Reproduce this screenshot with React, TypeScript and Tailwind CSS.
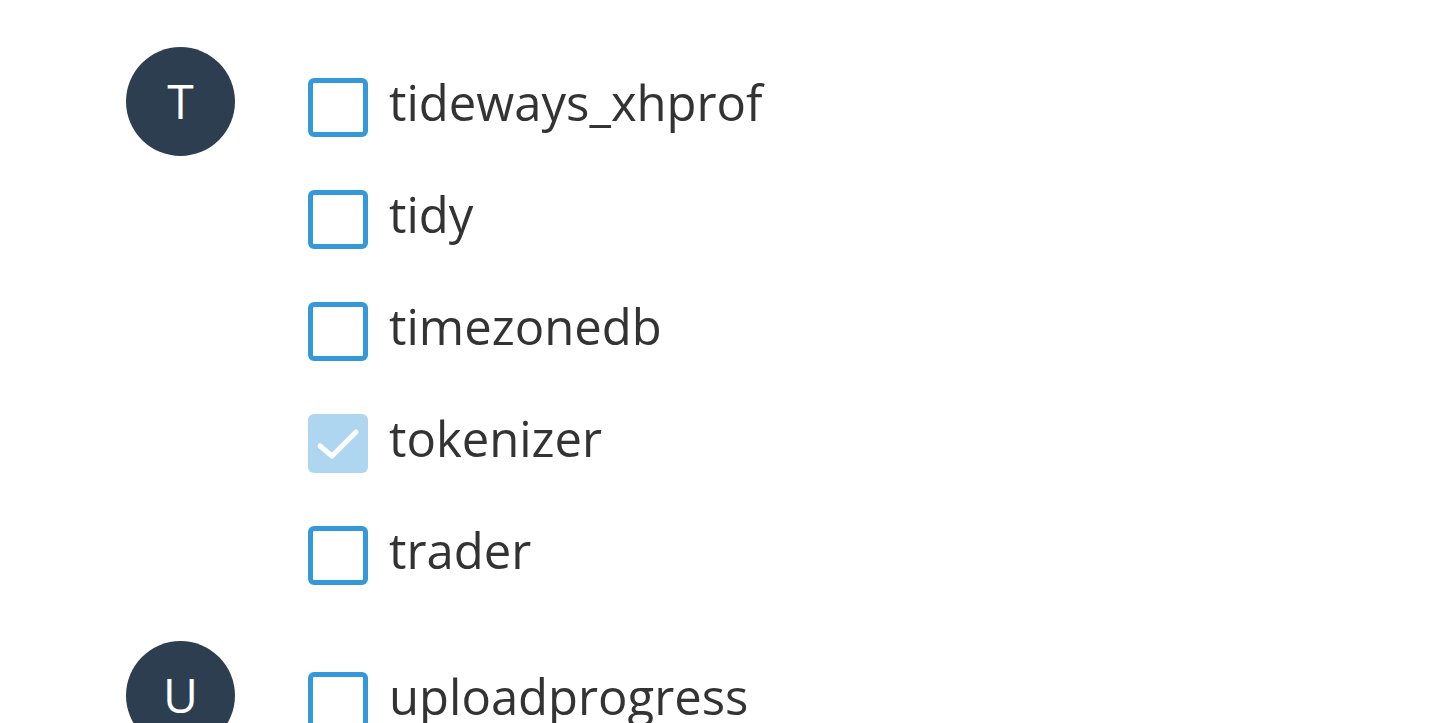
import React from 'react';

interface Group {
  letter: string;
  items: { name: string; checked?: boolean }[];
}

const groups: Group[] = [
  {
    letter: 'T',
    items: [
      { name: 'tideways_xhprof' },
      { name: 'tidy' },
      { name: 'timezonedb' },
      { name: 'tokenizer', checked: true },
      { name: 'trader' },
    ],
  },
  {
    letter: 'U',
    items: [{ name: 'uploadprogress' }],
  },
];

function Checkbox({ checked }: { checked?: boolean }) {
  if (checked) {
    return (
      <span className="flex h-[59px] w-[60px] shrink-0 items-center justify-center rounded-[6px] bg-[#aed6f1]">
        <svg width="44" height="34" viewBox="0 0 44 34" fill="none">
          <path d="M4 19 L16 29 L40 5" stroke="white" strokeWidth="5" strokeLinecap="round" strokeLinejoin="round" />
        </svg>
      </span>
    );
  }
  return <span className="block h-[59px] w-[60px] shrink-0 rounded-[6px] border-[5px] border-[#3498db] bg-white" />;
}

export default function App() {
  return (
    <div className="h-[723px] overflow-hidden bg-white pl-[126px] pt-[47px] font-['Open_Sans',sans-serif]">
      <div className="flex flex-col gap-[56px]">
        {groups.map((group) => (
          <div key={group.letter} className="flex items-start">
            <div className="flex h-[109px] w-[109px] shrink-0 items-center justify-center rounded-full bg-[#2c3e50] pb-[2px] text-[48px] leading-none text-white">
              {group.letter}
            </div>
            <ul className="ml-[73px] flex flex-col gap-[53px] pt-[31px]">
              {group.items.map((item) => (
                <li key={item.name} className="flex h-[59px] items-center gap-[21px]">
                  <Checkbox checked={item.checked} />
                  <span className="pb-[10px] text-[49px] leading-none text-[#333333]">{item.name}</span>
                </li>
              ))}
            </ul>
          </div>
        ))}
      </div>
    </div>
  );
}
